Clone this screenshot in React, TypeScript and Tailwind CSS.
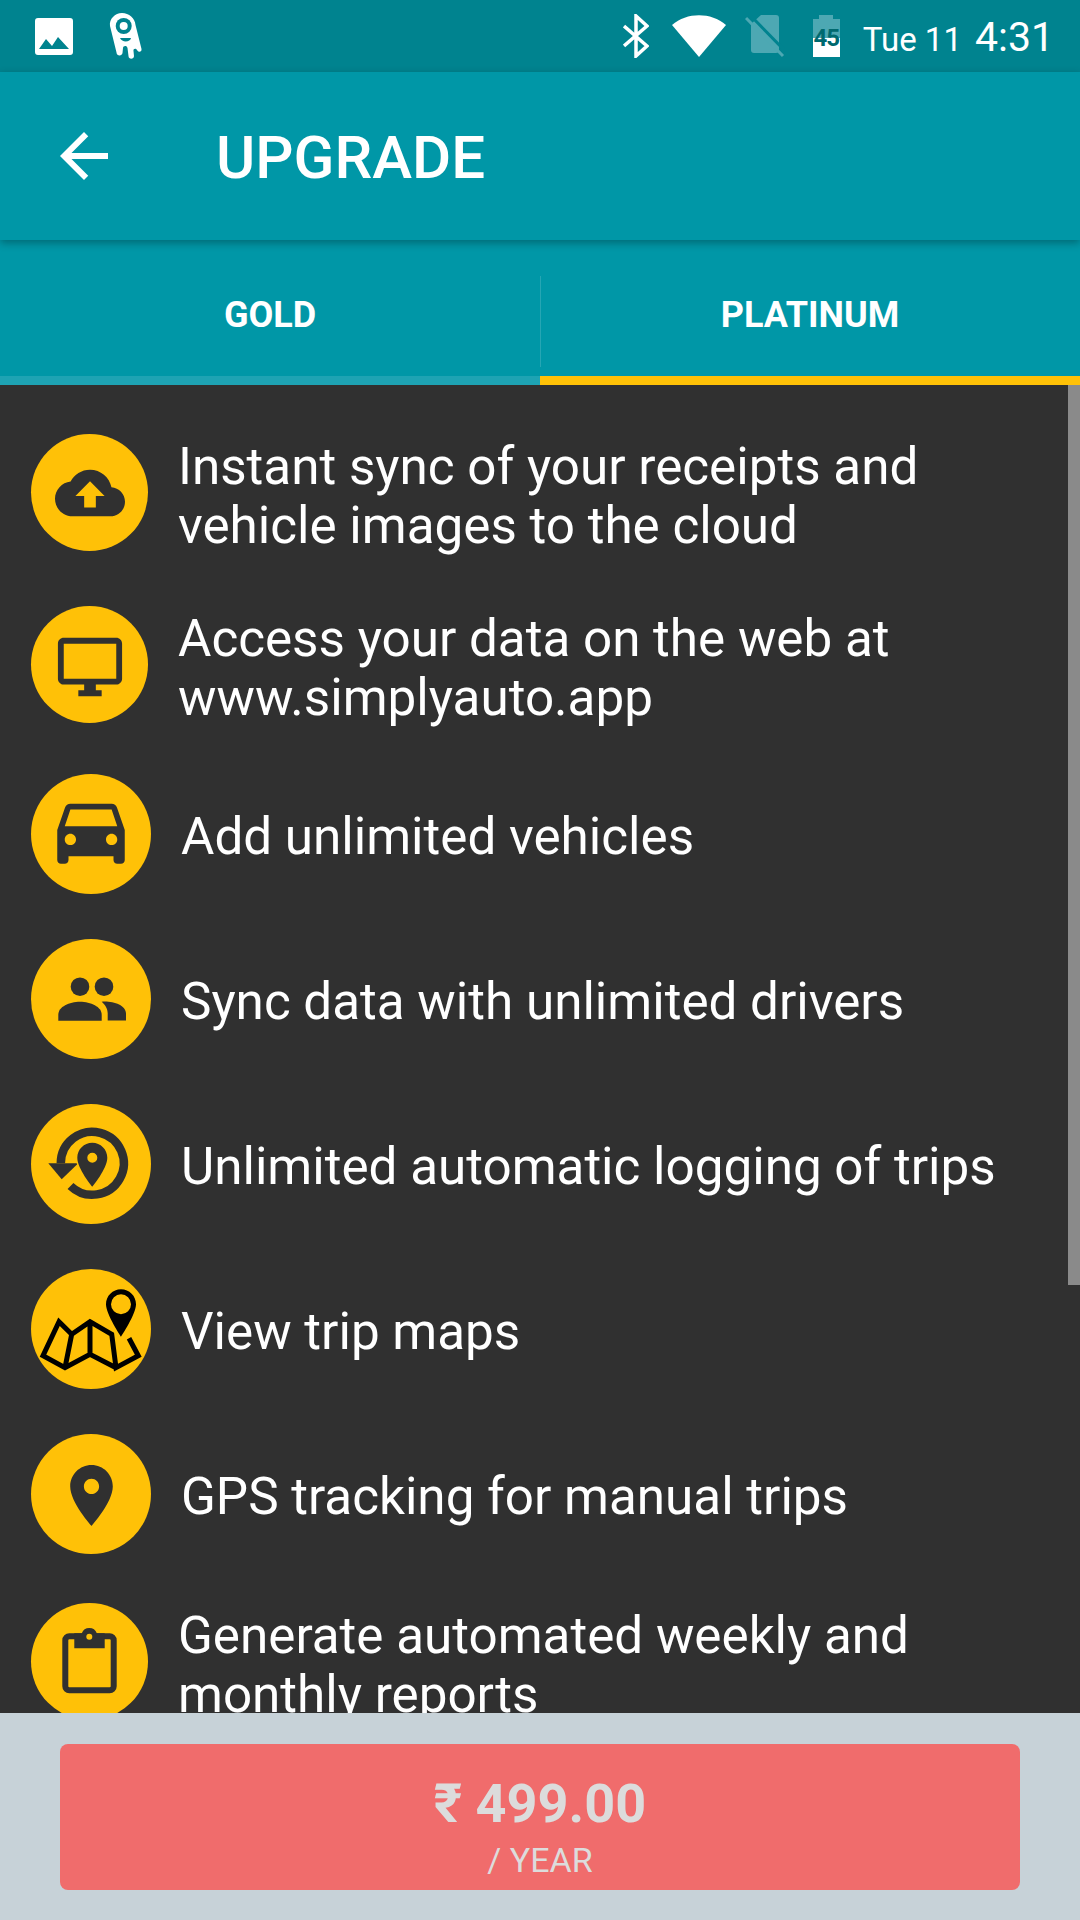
const font = "font-['Roboto',sans-serif]";

function Glyph({ d, size }: { d: string; size: string }) {
  return (
    <svg viewBox="0 0 24 24" className={size} fill="#303030">
      <path d={d} fillRule="evenodd" />
    </svg>
  );
}

function GroupIcon() {
  return (
    <svg viewBox="0 0 120 120" className="h-[120px] w-[120px]" fill="#303030">
      <circle cx="49" cy="47.7" r="9.3" />
      <circle cx="73" cy="47.7" r="9.3" />
      <path d="M27.3 81.7v-6c0-8 11-13 21.7-13s21.7 5 21.7 13v6z" />
      <path d="M70.7 62.7c1-.1 2-.1 3-.1 10 0 21.3 4 21.3 12v7H76.7v-7c0-5-2.5-9-6-11.9z" />
    </svg>
  );
}

function TripIcon() {
  return (
    <svg viewBox="0 0 120 120" className="h-[120px] w-[120px]">
      <path d="M29.8 59.3A31.5 31.5 0 1 1 39.5 82" fill="none" stroke="#303030" strokeWidth="8.5" />
      <path d="M17.3 59.3h30L30.7 75.3z" fill="#303030" />
      <path
        d="M61.3 38.7c-8.3 0-15 6.7-15 15 0 11 15 29 15 29s15-18 15-29c0-8.3-6.7-15-15-15zm0 20a5 5 0 1 1 0-10 5 5 0 0 1 0 10z"
        fill="#303030"
        fillRule="evenodd"
        stroke="#ffc107"
        strokeWidth="3"
        paintOrder="stroke"
      />
    </svg>
  );
}

function MapIcon() {
  return (
    <svg viewBox="0 0 120 120" className="h-[120px] w-[120px]">
      <path d="M90 20.3c-8.3 0-15 6.7-15 15 0 10 15 32.4 15 32.4s15-22.4 15-32.4c0-8.3-6.7-15-15-15zm0 25a10 10 0 1 1 0-20 10 10 0 0 1 0 20z" fill="#000" fillRule="evenodd" />
      <path
        d="M98 69.3l9.3 17.4L85 98.7 80.7 65.3 59 52.7 40.7 65.300 28 52.7 12 86.7 34 98.7 59 85.3 85 98.7M40.700 65.300 34 98.7M59 52.7V85.3"
        fill="none"
        stroke="#000"
        strokeWidth="5"
      />
    </svg>
  );
}

function ClipIcon() {
  return (
    <svg viewBox="0 0 117 117" className="h-[117px] w-[117px]">
      <rect x="34.3" y="33.3" width="48.4" height="54" rx="4" fill="none" stroke="#303030" strokeWidth="6" />
      <path d="M43.3 30.3h7.5a8 8 0 0 1 15 0h7.9v15H43.3z" fill="#303030" />
      <circle cx="58.3" cy="33.7" r="3" fill="#ffc107" />
    </svg>
  );
}

const cloud = "M19.35 10.04C18.67 6.59 15.64 4 12 4 9.11 4 6.6 5.64 5.35 8.04 2.34 8.36 0 10.91 0 14c0 3.31 2.69 6 6 6h13c2.76 0 5-2.24 5-5 0-2.64-2.05-4.78-4.65-4.96zM14 13v4h-4v-4H7l5-5 5 5h-3z";
const desktop = "M21 2H3c-1.1 0-2 .9-2 2v12c0 1.1.9 2 2 2h7v2H8v2h8v-2h-2v-2h7c1.1 0 2-.9 2-2V4c0-1.1-.9-2-2-2zm0 14H3V4h18v12z";
const car = "M18.92 6.01C18.72 5.42 18.16 5 17.5 5h-11c-.66 0-1.21.42-1.42 1.01L3 12v8c0 .55.45 1 1 1h1c.55 0 1-.45 1-1v-1h12v1c0 .55.45 1 1 1h1c.55 0 1-.45 1-1v-8l-2.08-5.99zM6.5 16c-.83 0-1.5-.67-1.5-1.5S5.67 13 6.5 13s1.5.67 1.5 1.5S7.33 16 6.5 16zm11 0c-.83 0-1.5-.67-1.5-1.5s.67-1.5 1.5-1.5 1.5.67 1.5 1.5-.67 1.5-1.5 1.5zM5 11l1.5-4.5h11L19 11H5z";
const place = "M12 2C8.13 2 5 5.13 5 9c0 5.25 7 13 7 13s7-7.75 7-13c0-3.87-3.13-7-7-7zm0 9.5c-1.38 0-2.5-1.12-2.5-2.5s1.12-2.5 2.5-2.5 2.5 1.12 2.5 2.5-1.12 2.5-2.5 2.5z";

const features = [
  { text: ["Instant sync of your receipts and", "vehicle images to the cloud"], icon: <Glyph d={cloud} size="h-[70px] w-[70px]" />, small: true, margin: "mt-[49px]" },
  { text: ["Access your data on the web at", "www.simplyauto.app"], icon: <Glyph d={desktop} size="mt-[4px] h-[70px] w-[70px]" />, small: true, margin: "mt-[55px]" },
  { text: ["Add unlimited vehicles"], icon: <Glyph d={car} size="mb-[8px] h-[90px] w-[90px]" />, small: false, margin: "mt-[51px]" },
  { text: ["Sync data with unlimited drivers"], icon: <GroupIcon />, small: false, margin: "mt-[45px]" },
  { text: ["Unlimited automatic logging of trips"], icon: <TripIcon />, small: false, margin: "mt-[45px]" },
  { text: ["View trip maps"], icon: <MapIcon />, small: false, margin: "mt-[45px]" },
  { text: ["GPS tracking for manual trips"], icon: <Glyph d={place} size="mt-[3px] h-[73px] w-[73px]" />, small: false, margin: "mt-[45px]" },
  { text: ["Generate automated weekly and", "monthly reports"], icon: <ClipIcon />, small: true, margin: "mt-[49px]" },
];

function StatusBar() {
  return (
    <div className="flex h-[72px] shrink-0 items-center bg-[#00838f] pl-[35px] pr-[26px]">
      <svg viewBox="0 0 38 37" className="h-[37px] w-[38px]">
        <path d="M3 0h32a3 3 0 0 1 3 3v31a3 3 0 0 1-3 3H3a3 3 0 0 1-3-3V3a3 3 0 0 1 3-3zM4 31h30L23 19l-6 9-6-7z" fill="#fff" fillRule="evenodd" />
      </svg>
      <svg viewBox="0 0 34 48" className="ml-[36px] h-[48px] w-[34px]">
        <path d="M13 1c7 0 13 5 13.500 12l6 24c.5 3-3 4-4.500 1-1-2-4-1.500-3.500 1l.5 5c0 3.500-5.500 3.500-5.500 0l-1-8c-.5-3-4.500-2.500-4.500 0l-.5 5c-.5 3.500-6 3-6-.5L1 14C0 7 6 1 13 1z" fill="#fff" />
        <circle cx="14.700" cy="14" r="8" fill="#00838f" />
        <circle cx="14.700" cy="14" r="4" fill="#fff" />
        <path d="M11 26h11c-.5 4-9 5-11 0z" fill="#00838f" />
      </svg>
      <div className="ml-auto flex items-center">
        <svg viewBox="0 0 26 44" className="h-[44px] w-[26px]">
          <path d="M1 12 24 32 13 42V2l11 10L1 32" fill="none" stroke="#fff" strokeWidth="3.500" />
        </svg>
        <svg viewBox="0 0 54 42" className="ml-[23px] h-[42px] w-[54px]">
          <path d="M0 10C15-3 39-3 54 10L27 42z" fill="#fff" />
        </svg>
        <svg viewBox="0 0 40 44" className="ml-[19px] h-[44px] w-[40px]">
          <path d="M16 1h15a3 3 0 0 1 3 3v32a3 3 0 0 1-3 3H9a3 3 0 0 1-3-3V10z" fill="#4da8b3" />
          <path d="M4 0 41 38" stroke="#00838f" strokeWidth="3" />
          <path d="M1 4 38 42" stroke="#4da8b3" strokeWidth="3" />
        </svg>
        <div className="relative ml-[28px] flex h-[42px] w-[27px] flex-col items-center">
          <div className="h-[4px] w-[14px] bg-[#4da8b3]" />
          <div className="h-[19px] w-full bg-[#4da8b3]" />
          <div className="h-[19px] w-full bg-white" />
          <span className={`${font} absolute top-[9px] text-[24px] leading-[28px] font-bold tracking-[-1px] text-[#00696f]`}>45</span>
        </div>
        <div className="ml-[23px] flex items-baseline pt-[3px] text-white">
          <span className={`${font} text-[33px] leading-none`}>Tue 11</span>
          <span className={`${font} ml-[13px] text-[41px] leading-none`}>4:31</span>
        </div>
      </div>
    </div>
  );
}

export default function App() {
  return (
    <div className={`${font} flex h-[1920px] w-[1080px] flex-col overflow-hidden bg-[#303030]`}>
      <StatusBar />
      <div className="z-10 flex h-[168px] shrink-0 items-center bg-[#0097a7] pl-[48px] shadow-[0_3px_8px_rgba(0,0,0,0.3)]">
        <svg viewBox="0 0 24 24" className="h-[72px] w-[72px]" fill="#fff">
          <path d="M20 11H7.830l5.590-5.590L12 4l-8 8 8 8 1.410-1.410L7.830 13H20v-2z" />
        </svg>
        <h1 className="ml-[96px] pt-[4px] text-[60px] font-medium leading-none text-white">UPGRADE</h1>
      </div>
      <div className="flex h-[145px] shrink-0 items-stretch bg-[#0097a7]">
        <div className="flex w-[540px] items-center justify-center border-b-[9px] border-[#1ea3b3] pt-[14px] text-[36px] font-bold text-white">GOLD</div>
        <div className="relative flex w-[540px] items-center justify-center border-b-[9px] border-[#ffc107] pt-[14px] text-[36px] font-bold text-white">
          <div className="absolute left-0 top-[36px] h-[91px] w-px bg-white/15" />
          PLATINUM
        </div>
      </div>
      <div className="relative min-h-0 flex-1 overflow-hidden pl-[31px]">
        <div className="absolute right-0 top-0 h-[900px] w-[12px] bg-[#8a8a8a]" />
        {features.map((f) => (
          <div key={f.text[0]} className={`${f.margin} ${f.small ? "h-[117px]" : "h-[120px]"} flex items-center`}>
            <div className={`${f.small ? "h-[117px] w-[117px]" : "h-[120px] w-[120px]"} flex shrink-0 items-center justify-center rounded-full bg-[#ffc107]`}>
              {f.icon}
            </div>
            <p className={`${f.small ? "pt-[6px]" : "pt-[4px]"} ml-[30px] text-[51.2px] leading-[59px] whitespace-nowrap text-white`}>
              {f.text.map((line) => (
                <span key={line} className="block">{line}</span>
              ))}
            </p>
          </div>
        ))}
      </div>
      <div className="z-10 h-[207px] shrink-0 bg-[#c7d2d8] px-[60px] pt-[31px]">
        <div className="flex h-[146px] flex-col items-center rounded-[8px] bg-[#f06c6c] pt-[30px] text-[#dcdcdc]">
          <span className="text-[54px] font-bold leading-[60px]">₹ 499.00</span>
          <span className="mt-[6px] text-[34px] leading-[40px]">/ YEAR</span>
        </div>
      </div>
    </div>
  );
}
